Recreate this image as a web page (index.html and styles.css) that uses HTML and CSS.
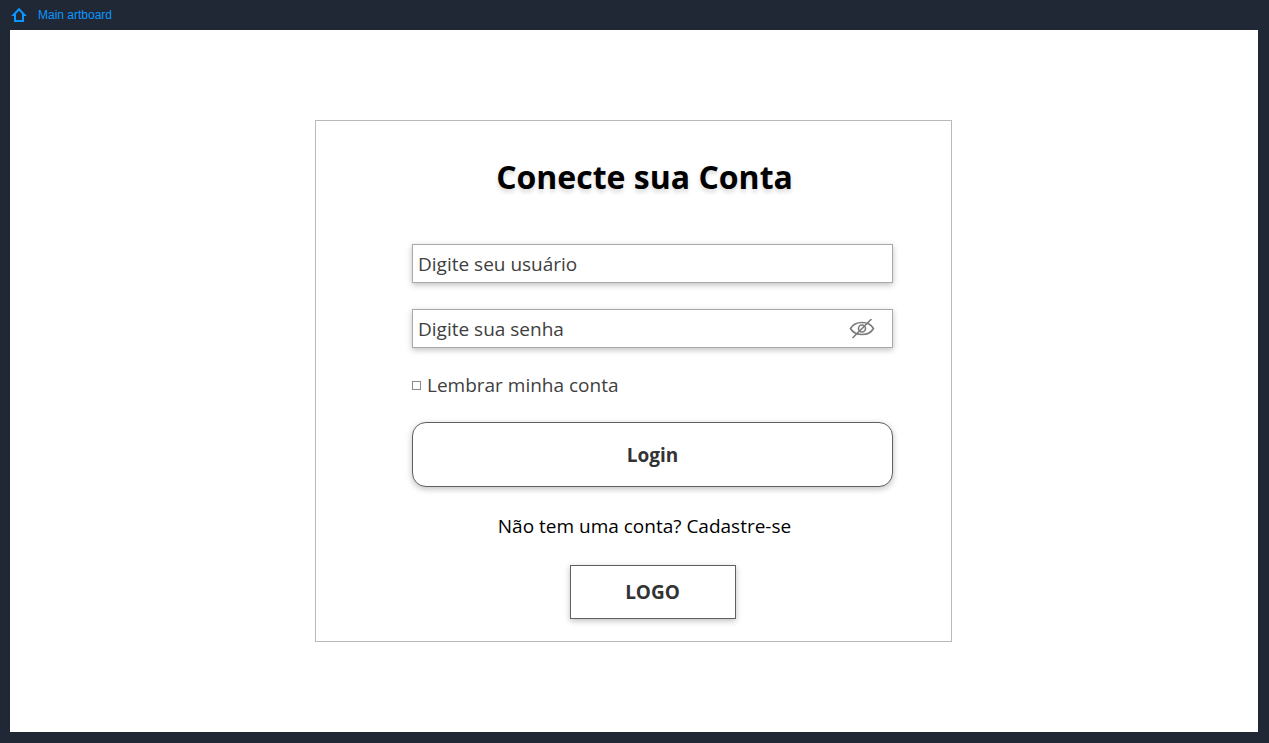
FILE: index.html
```html
<!DOCTYPE html>
<html lang="pt-BR">
<head>
<meta charset="utf-8">
<meta name="viewport" content="width=device-width, initial-scale=1">
<title>Conecte sua Conta</title>
<link rel="stylesheet" href="styles.css">
</head>
<body class="page">
<header class="topbar">
  <a class="crumb" href="#">
    <svg class="home-icon" viewBox="0 0 18 18" aria-hidden="true"><path d="M5 9H3.500L9 3.300 14.500 9H13v6H5Z"/></svg>
    <span>Main artboard</span>
  </a>
</header>
<main class="canvas">
  <form class="card">
    <h1 class="title">Conecte sua Conta</h1>
    <input class="field" type="text" placeholder="Digite seu usuário" aria-label="Usuário">
    <div class="field password">
      <input class="password-input" type="password" placeholder="Digite sua senha" aria-label="Senha">
      <button class="eye-button" type="button" aria-label="Mostrar senha">
        <svg class="eye-icon" viewBox="0 0 26 20" aria-hidden="true"><path d="M1.500 9.500C6 1.500 20 1.500 24.500 9.500 20 17.500 6 17.500 1.500 9.500ZM3.500 19 22.500 0"/><circle cx="13" cy="9.500" r="3.500"/></svg>
      </button>
    </div>
    <label class="remember"><input class="tick" type="checkbox"><span>Lembrar minha conta</span></label>
    <button class="login" type="submit">Login</button>
    <p class="signup">Não tem uma conta? <a class="signup-link" href="#">Cadastre-se</a></p>
    <div class="logo">LOGO</div>
  </form>
</main>
</body>
</html>
```
FILE: styles.css
```css
* {
  box-sizing: border-box;
}

.page {
  display: flex;
  flex-direction: column;
  min-height: 100vh;
  margin: 0;
  padding: 0 11px 11px 10px;
  background: #202835;
  color: #333;
  font-family: "Open Sans", "Noto Sans", sans-serif;
  font-size: 19px;
  line-height: 26px;
}

.topbar {
  display: flex;
  align-items: center;
  height: 30px;
}

.crumb {
  display: flex;
  align-items: center;
  gap: 10px;
  color: #0b97ff;
  font-family: "Liberation Sans", Arial, sans-serif;
  font-size: 12px;
  line-height: 16px;
  text-decoration: none;
}

.home-icon {
  width: 18px;
  height: 18px;
  fill: none;
  stroke: currentColor;
  stroke-width: 2;
}

.canvas {
  display: flex;
  flex: 1;
  align-items: center;
  justify-content: center;
  padding-right: 1px;
  background: #fff;
}

.card {
  display: flex;
  flex-direction: column;
  width: 100%;
  max-width: 637px;
  padding: 32px 58px 22px 96px;
  border: 1px solid #b9b9b9;
}

.title {
  margin: 0 0 43px;
  padding-right: 16px;
  color: #000;
  font-size: 32px;
  font-weight: 700;
  line-height: 48px;
  text-align: center;
  text-shadow: 0 3px 4px rgba(0, 0, 0, 0.15);
}

.field {
  width: 100%;
  height: 39px;
  margin-bottom: 26px;
  padding: 0 5px;
  border: 1px solid #a9a9a9;
  background: #fff;
  box-shadow: 0 2px 6px rgba(0, 0, 0, 0.25);
  color: inherit;
  font: inherit;
}

.field::placeholder,
.password-input::placeholder {
  color: #404040;
  opacity: 1;
}

.password {
  display: flex;
  align-items: center;
  padding-right: 17px;
}

.password-input {
  flex: 1;
  min-width: 0;
  padding: 0;
  border: 0;
  outline: 0;
  background: none;
  color: inherit;
  font: inherit;
}

.eye-button {
  display: flex;
  padding: 0;
  border: 0;
  background: none;
  cursor: pointer;
}

.eye-icon {
  width: 26px;
  height: 20px;
  fill: none;
  stroke: #7b7b7b;
  stroke-width: 1.6;
}

.remember {
  display: flex;
  align-items: center;
  align-self: flex-start;
  gap: 6px;
  margin-bottom: 26px;
  color: #404040;
  line-height: 22px;
}

.tick {
  width: 9px;
  height: 9px;
  margin: 0;
  border: 1px solid #8a8a8a;
  background: #fff;
  appearance: none;
}

.tick:checked {
  background: #404040;
}

.login {
  height: 65px;
  margin-bottom: 26px;
  border: 1px solid #606060;
  border-radius: 14px;
  background: #fff;
  box-shadow: 0 2px 6px rgba(0, 0, 0, 0.25);
  color: #333;
  font: inherit;
  font-weight: 700;
  cursor: pointer;
}

.signup {
  margin: 0 0 26px;
  padding-right: 16px;
  color: #000;
  text-align: center;
}

.signup-link {
  color: inherit;
  text-decoration: none;
}

.logo {
  display: flex;
  align-items: center;
  justify-content: center;
  align-self: center;
  width: 166px;
  height: 54px;
  border: 1px solid #606060;
  background: #fff;
  box-shadow: 0 2px 6px rgba(0, 0, 0, 0.25);
  font-weight: 700;
}
```
